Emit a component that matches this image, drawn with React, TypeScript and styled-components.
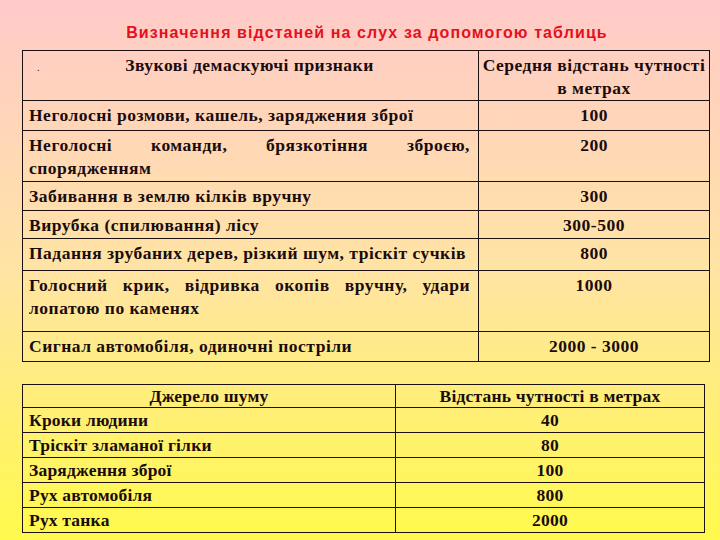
import React from "react";
import styled, { createGlobalStyle } from "styled-components";

const GlobalStyle = createGlobalStyle`
  html, body {
    margin: 0;
    padding: 0;
  }
  body {
    width: 720px;
    height: 540px;
    overflow: hidden;
    background: linear-gradient(180deg, #ffcaca 0%, #ffe4a4 50%, #fffa4c 100%);
    font-family: "Liberation Serif", "Times New Roman", serif;
    color: #1a0c0c;
  }
`;

const Page = styled.div`
  display: flex;
  flex-direction: column;
  padding: 24px 0 0 22px;
  width: 720px;
  height: 540px;
  box-sizing: border-box;
`;

const Title = styled.h1`
  width: 690px;
  margin: 0 0 8px;
  font-family: "Liberation Sans", Arial, sans-serif;
  font-size: 16px;
  line-height: 18px;
  font-weight: 700;
  letter-spacing: 1.1px;
  color: #e3111d;
  text-align: center;
`;

const Table = styled.table<{ $width: number; $gap?: number; $spacing: number }>`
  width: ${(p) => p.$width}px;
  margin-top: ${(p) => p.$gap ?? 0}px;
  border-collapse: collapse;
  table-layout: fixed;
  font-size: 17.5px;
  font-weight: 700;
  letter-spacing: ${(p) => p.$spacing}px;
`;

const Row = styled.tr<{ $h: number }>`
  height: ${(p) => p.$h}px;
`;

const Cell = styled.td<{ $center?: boolean; $middle?: boolean }>`
  border: 1px solid #1c1010;
  padding: ${(p) => (p.$middle ? "0 6px" : p.$center ? "3px 3px 0" : "3px 8px 0 6px")};
  vertical-align: ${(p) => (p.$middle ? "middle" : "top")};
  line-height: ${(p) => (p.$middle ? "20px" : "23px")};
  text-align: ${(p) => (p.$center ? "center" : "justify")};
  text-align-last: ${(p) => (p.$center ? "center" : "left")};
  box-sizing: border-box;
`;

const HeadInner = styled.div`
  display: grid;
  grid-template-columns: 24px 1fr 24px;
  align-items: baseline;
`;

const Dot = styled.span`
  padding-left: 8px;
  font-size: 10px;
  font-weight: 400;
`;

const HeadText = styled.span`
  text-align: center;
  text-align-last: center;
`;

const soundRows: { h: number; text: string; dist: string }[] = [
  { h: 30, text: "Неголосні розмови, кашель, заряджения зброї", dist: "100" },
  { h: 51, text: "Неголосні команди, брязкотіння зброєю, спорядженням", dist: "200" },
  { h: 29, text: "Забивання в землю кілків вручну", dist: "300" },
  { h: 28, text: "Вирубка (спилювання) лісу", dist: "300-500" },
  { h: 32, text: "Падання зрубаних дерев, різкий шум, тріскіт сучків", dist: "800" },
  { h: 61, text: "Голосний крик, відривка окопів вручну, удари лопатою по каменях", dist: "1000" },
  { h: 30, text: "Сигнал автомобіля, одиночні постріли", dist: "2000 - 3000" },
];

const noiseRows: { text: string; dist: string }[] = [
  { text: "Кроки людини", dist: "40" },
  { text: "Тріскіт зламаної гілки", dist: "80" },
  { text: "Зарядження зброї", dist: "100" },
  { text: "Рух автомобіля", dist: "800" },
  { text: "Рух танка", dist: "2000" },
];

export default function App() {
  return (
    <>
      <GlobalStyle />
      <Page>
        <Title>Визначення відстаней на слух за допомогою таблиць</Title>
        <Table $width={687} $spacing={0.5}>
          <colgroup>
            <col style={{ width: 456 }} />
            <col style={{ width: 231 }} />
          </colgroup>
          <tbody>
            <Row $h={50}>
              <Cell>
                <HeadInner>
                  <Dot>.</Dot>
                  <HeadText>Звукові демаскуючі признаки</HeadText>
                  <span />
                </HeadInner>
              </Cell>
              <Cell $center>Середня відстань чутності в метрах</Cell>
            </Row>
            {soundRows.map((r) => (
              <Row key={r.text} $h={r.h}>
                <Cell>{r.text}</Cell>
                <Cell $center>{r.dist}</Cell>
              </Row>
            ))}
          </tbody>
        </Table>
        <Table $width={682} $gap={22} $spacing={0.2}>
          <colgroup>
            <col style={{ width: 373 }} />
            <col style={{ width: 309 }} />
          </colgroup>
          <tbody>
            <Row $h={23}>
              <Cell $center $middle>Джерело шуму</Cell>
              <Cell $center $middle>Відстань чутності в метрах</Cell>
            </Row>
            {noiseRows.map((r) => (
              <Row key={r.text} $h={25}>
                <Cell $middle>{r.text}</Cell>
                <Cell $center $middle>{r.dist}</Cell>
              </Row>
            ))}
          </tbody>
        </Table>
      </Page>
    </>
  );
}
